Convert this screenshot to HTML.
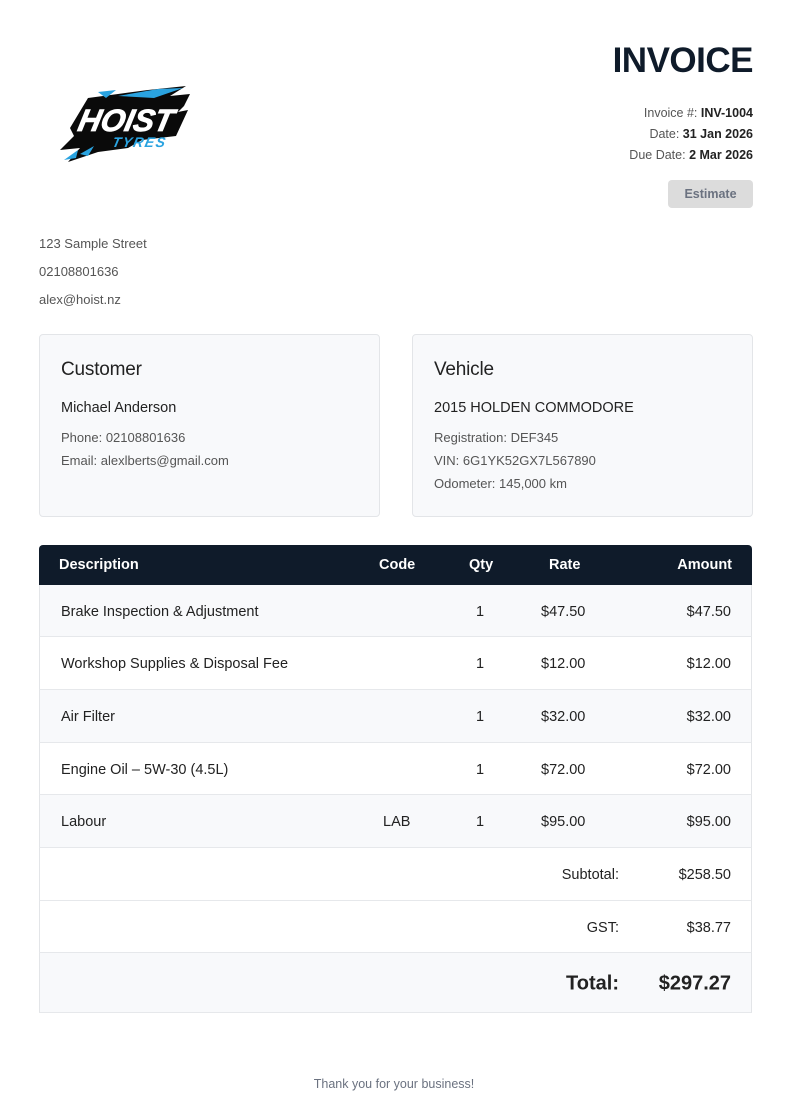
<!DOCTYPE html>
<html><head><meta charset="utf-8"><style>
*{margin:0;padding:0;box-sizing:border-box}
body{width:788px;height:1116px;background:#fff;font-family:"Liberation Sans",sans-serif;color:#1f2937;position:relative;overflow:hidden}
.a{position:absolute;white-space:nowrap}
.r{text-align:right}
.g{color:#555}
.card{position:absolute;top:334px;width:341px;height:183px;background:#f8f9fb;border:1px solid #e3e5e8;border-radius:4px}
.card h2{position:absolute;left:21px;top:24px;font-size:19px;font-weight:normal;color:#222;letter-spacing:-.2px}
.card .n{position:absolute;left:21px;top:65px;font-size:14.5px;color:#222}
.card .l{position:absolute;left:21px;font-size:13px;color:#555}
.row{position:absolute;left:39px;width:713px;border-left:1px solid #e3e5e8;border-right:1px solid #e3e5e8;border-bottom:1px solid #e6e8eb;font-size:14.5px;color:#222}
.row span{position:absolute;top:50%;transform:translateY(-45%);white-space:nowrap}
.c1{left:21px}.c2{left:343px}.c3{left:436px}.c4{left:501px}.c5{right:20px}
.grey{background:#f8f9fb}
</style></head><body>
<svg class="a" style="left:58px;top:84px" width="138" height="82" viewBox="0 0 138 82">
<g fill="#0a0a0a">
<polygon points="30,14 60,10 90,6 128,2 112,12 132,10 126,22 120,28 130,26 118,52 84,56 70,64 40,68 10,78 22,64 2,66 16,52 12,44"/>
</g>
<g fill="#2aa3e0">
<polygon points="60,12 100,5 125,4 96,14"/>
<polygon points="40,8 58,6 48,14"/>
<polygon points="22,70 36,62 30,72"/>
<polygon points="6,76 20,66 18,74"/>
</g>
<text x="64" y="47" font-family="Liberation Sans" font-weight="bold" font-style="italic" font-size="31" fill="#fff" text-anchor="middle" stroke="#fff" stroke-width="0.8" transform="skewX(-12) translate(12,0)">HOIST</text>
<text x="80" y="63" font-family="Liberation Sans" font-weight="bold" font-style="italic" font-size="14" fill="#2aa3e0" text-anchor="middle" transform="skewX(-12) translate(14,0)" letter-spacing="1.5">TYRES</text>
</svg>
<div class="a r" style="right:35px;top:41px;font-size:35px;font-weight:bold;color:#0f1b2a;letter-spacing:-.5px">INVOICE</div>
<div class="a r g" style="right:35px;top:106px;font-size:12.5px">Invoice #: <b style="color:#222">INV-1004</b></div>
<div class="a r g" style="right:35px;top:127px;font-size:12.5px">Date: <b style="color:#222">31 Jan 2026</b></div>
<div class="a r g" style="right:35px;top:148px;font-size:12.5px">Due Date: <b style="color:#222">2 Mar 2026</b></div>
<div class="a" style="left:668px;top:180px;width:85px;height:28px;background:#dcdcdc;border-radius:4px;color:#6b7280;font-size:12.5px;font-weight:bold;text-align:center;line-height:28px">Estimate</div>
<div class="a g" style="left:39px;top:236px;font-size:13px">123 Sample Street</div>
<div class="a g" style="left:39px;top:264px;font-size:13px">02108801636</div>
<div class="a g" style="left:39px;top:292px;font-size:13px">alex@hoist.nz</div>
<div class="card" style="left:39px"><h2>Customer</h2><div class="n">Michael Anderson</div>
<div class="l" style="top:95px">Phone: 02108801636</div><div class="l" style="top:118px">Email: alexlberts@gmail.com</div></div>
<div class="card" style="left:412px"><h2>Vehicle</h2><div class="n">2015 HOLDEN COMMODORE</div>
<div class="l" style="top:95px">Registration: DEF345</div><div class="l" style="top:118px">VIN: 6G1YK52GX7L567890</div><div class="l" style="top:141px">Odometer: 145,000 km</div></div>
<div class="a" style="left:39px;top:545px;width:713px;height:40px;background:#0f1b2a;border-radius:4px 4px 0 0;color:#fff;font-size:14.5px;font-weight:bold">
<span class="a" style="left:20px;top:12px">Description</span><span class="a" style="left:340px;top:12px">Code</span><span class="a" style="left:430px;top:12px">Qty</span><span class="a" style="left:510px;top:12px">Rate</span><span class="a" style="right:20px;top:12px">Amount</span></div>
<div class="row grey" style="top:585px;height:52px"><span class="c1">Brake Inspection &amp; Adjustment</span><span class="c3">1</span><span class="c4">$47.50</span><span class="c5">$47.50</span></div>
<div class="row" style="top:637px;height:53px"><span class="c1">Workshop Supplies &amp; Disposal Fee</span><span class="c3">1</span><span class="c4">$12.00</span><span class="c5">$12.00</span></div>
<div class="row grey" style="top:690px;height:53px"><span class="c1">Air Filter</span><span class="c3">1</span><span class="c4">$32.00</span><span class="c5">$32.00</span></div>
<div class="row" style="top:743px;height:52px"><span class="c1">Engine Oil – 5W-30 (4.5L)</span><span class="c3">1</span><span class="c4">$72.00</span><span class="c5">$72.00</span></div>
<div class="row grey" style="top:795px;height:53px"><span class="c1">Labour</span><span class="c2">LAB</span><span class="c3">1</span><span class="c4">$95.00</span><span class="c5">$95.00</span></div>
<div class="row" style="top:848px;height:53px"><span style="right:132px">Subtotal:</span><span class="c5">$258.50</span></div>
<div class="row" style="top:901px;height:52px"><span style="right:132px">GST:</span><span class="c5">$38.77</span></div>
<div class="row grey" style="top:953px;height:60px;font-size:20px;font-weight:bold"><span style="right:132px">Total:</span><span class="c5">$297.27</span></div>
<div class="a" style="left:0;width:788px;top:1077px;text-align:center;font-size:12.5px;color:#6b7280">Thank you for your business!</div>
</body></html>
